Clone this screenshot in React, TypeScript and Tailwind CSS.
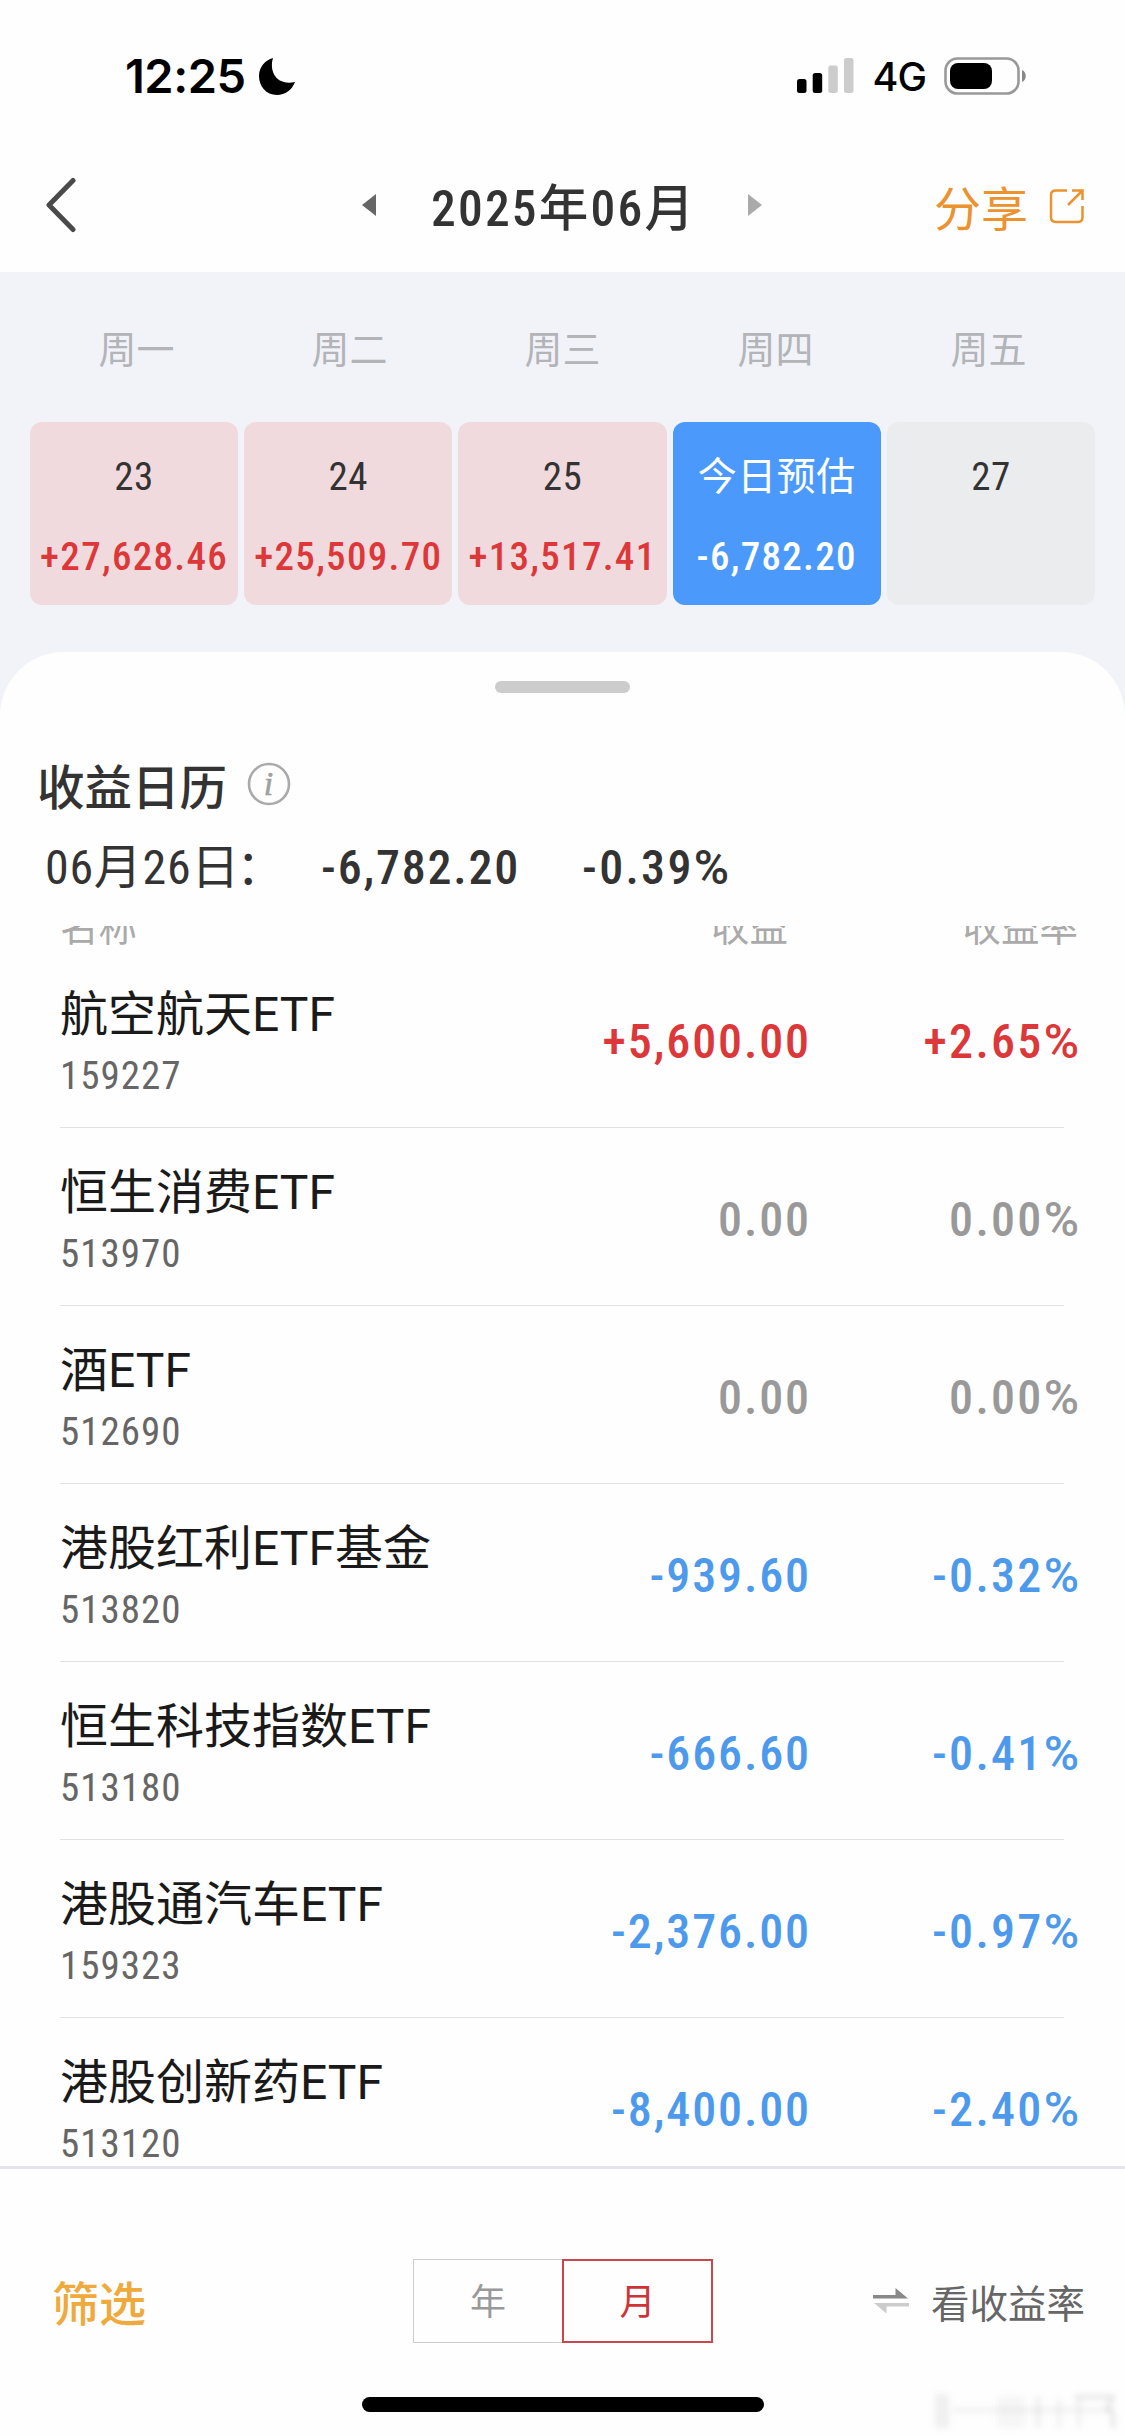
const holdings = [
  { name: '航空航天ETF', code: '159227', profit: '+5,600.00', rate: '+2.65' },
  { name: '恒生消费ETF', code: '513970', profit: '0.00', rate: '0.00' },
  { name: '酒ETF', code: '512690', profit: '0.00', rate: '0.00' },
  { name: '港股红利ETF基金', code: '513820', profit: '-939.60', rate: '-0.32' },
  { name: '恒生科技指数ETF', code: '513180', profit: '-666.60', rate: '-0.41' },
  { name: '港股通汽车ETF', code: '159323', profit: '-2,376.00', rate: '-0.97' },
  { name: '港股创新药ETF', code: '513120', profit: '-8,400.00', rate: '-2.40' },
];

const weekdays = ['周一', '周二', '周三', '周四', '周五'];

const days = [
  { label: '23', profit: '+27,628.46', className: 'bg-[#f1dade] text-[#333]' },
  { label: '24', profit: '+25,509.70', className: 'bg-[#f1dade] text-[#333]' },
  { label: '25', profit: '+13,517.41', className: 'bg-[#f1dade] text-[#333]' },
  { label: '今日预估', profit: '-6,782.20', className: 'bg-[#4b9afb] text-white' },
  { label: '27', profit: '', className: 'bg-[#ebecee] text-[#333]' },
];

function toneOf(value: string) {
  if (value.startsWith('+')) return 'text-[#dc3739]';
  if (value.startsWith('-')) return 'text-[#4d9aec]';
  return 'text-[#999]';
}

function Rate({ value }: { value: string }) {
  return (
    <span className="tracking-[2.3px]">
      {value}
      <span className="tracking-[1px] [font-stretch:100%]">%</span>
    </span>
  );
}

function StatusBar() {
  return (
    <div className="flex h-[136px] items-start justify-between pt-[57px] pr-[98px] pl-[125px] font-['Inter',sans-serif] text-black">
      <div className="flex h-[38px] items-center">
        <span className="w-[121px] text-[47px] font-semibold tracking-[-0.5px]">12:25</span>
        <svg className="ml-3" width="38" height="38" viewBox="0 0 38 38">
          <path d="M15 1C11 14 18 29 37 25C34 33 27 38 19 38C8 38 1 29 1 19C1 10 7 3 15 1Z" />
        </svg>
      </div>
      <div className="flex h-[38px] items-center">
        <svg width="58" height="36" viewBox="0 0 58 36">
          <rect x="0" y="21" width="9.5" height="14" rx="2.5" />
          <rect x="15.7" y="15" width="9.5" height="20" rx="2.5" />
          <rect x="31.3" y="7.5" width="9.5" height="27.5" rx="2.5" fill="#ccc" />
          <rect x="47" y="0" width="9.5" height="35" rx="2.5" fill="#ccc" />
        </svg>
        <span className="ml-[18px] pt-[3px] text-[39.5px] font-medium tracking-[-1px]">4G</span>
        <svg className="ml-[18px]" width="83" height="38" viewBox="0 0 83 38">
          <rect x="1.5" y="1.5" width="73" height="35" rx="12" fill="none" stroke="#999" strokeWidth="2.6" />
          <rect x="6" y="6" width="42" height="26" rx="8" />
          <path d="M78 13C83 15 83 23 78 25Z" fill="#888" />
        </svg>
      </div>
    </div>
  );
}

function Header() {
  return (
    <header className="flex h-[136px] items-center pr-[40px] pl-[46px]">
      <svg className="mt-0.5" width="32" height="56" viewBox="0 0 32 56" fill="none" stroke="#4a4a4a" strokeWidth="5" strokeLinecap="round" strokeLinejoin="round">
        <path d="M27 3.5L3 28L27 52.5" />
      </svg>
      <svg className="mt-0.5 ml-[284px]" width="14" height="22" viewBox="0 0 14 22">
        <path d="M14 0V22L0 11Z" fill="#666" />
      </svg>
      <h1 className="ml-[55px] w-[262px] pt-[10px] text-[49.5px] font-medium tracking-[2.2px] whitespace-nowrap text-[#333] [font-stretch:75%]">
        2025年06月
      </h1>
      <svg className="mt-0.5 ml-[55px]" width="14" height="22" viewBox="0 0 14 22">
        <path d="M0 0V22L14 11Z" fill="#aaa" />
      </svg>
      <div className="ml-auto flex items-center gap-[21px] text-[#ea9330]">
        <span className="pt-[12px] text-[47px] whitespace-nowrap">分享</span>
        <svg className="mt-1" width="36" height="36" viewBox="0 0 36 36" fill="none" stroke="currentColor" strokeWidth="2.5">
          <path d="M18 2.5H7Q2 2.5 2 7V29Q2 34 7 34H29Q33.5 34 33.5 29V18M23 2.5H33.5V12M33 3L19 17" />
        </svg>
      </div>
    </header>
  );
}

function WeekStrip() {
  return (
    <section className="h-[380px] bg-[#f2f3f8] px-[30px]">
      <div className="grid h-[150px] grid-cols-[repeat(5,213px)] items-center pt-1.5 text-center text-[38px] text-[#b3b4b8]">
        {weekdays.map((weekday) => (
          <p key={weekday}>{weekday}</p>
        ))}
      </div>
      <div className="grid grid-cols-5 gap-x-1.5">
        {days.map((day) => (
          <div key={day.label} className={`flex h-[183px] flex-col items-center rounded-xl pt-[27px] ${day.className}`}>
            <span className="text-[39px] leading-[56px] tracking-[0.5px] [font-stretch:75%]">{day.label}</span>
            <span
              className={`mt-[24px] text-[39px] leading-[56px] font-medium tracking-[1.3px] [font-stretch:75%] ${
                day.profit.startsWith('+') ? 'text-[#dc3739]' : ''
              }`}
            >
              {day.profit}
            </span>
          </div>
        ))}
      </div>
    </section>
  );
}

function Summary() {
  return (
    <div className="h-[274px] pl-[37px]">
      <div className="flex justify-center pt-[29px] pr-[37px]">
        <div className="h-3 w-[135px] rounded-full bg-[#ccc]" />
      </div>
      <div className="mt-[61px] flex h-[60px] items-center">
        <h2 className="pt-[11px] text-[47.5px] font-medium text-[#333]">收益日历</h2>
        <svg className="ml-[20px]" width="44" height="44" viewBox="0 0 44 44">
          <circle cx="22" cy="22" r="20" fill="none" stroke="#aaa" strokeWidth="2.6" />
          <text x="21.5" y="32.5" textAnchor="middle" fontSize="34" fontStyle="italic" fontFamily="Liberation Serif, serif" fill="#a0a0a0" stroke="#a0a0a0" strokeWidth="0.6">
            i
          </text>
        </svg>
      </div>
      <div className="mt-[24px] flex h-[60px] items-center pl-2 text-[48px] text-[#333] [font-stretch:75%]">
        <span className="w-[276px] tracking-[0.7px] whitespace-nowrap">
          06月26<span className="tracking-[-3px]">日：</span>
        </span>
        <span className="w-[261px] font-medium tracking-[1.8px]">-6,782.20</span>
        <span className="font-medium">
          <Rate value="-0.39" />
        </span>
      </div>
    </div>
  );
}

function HoldingsTable() {
  return (
    <div className="h-[1240px] overflow-hidden pr-[45px] pl-[60px]">
      <div className="-mt-[22px] grid h-[46px] grid-cols-[1fr_270px_290px] items-start pr-[2px] text-[38.5px] leading-[48px] text-[#aaa]">
        <span>名称</span>
        <span className="text-right">收益</span>
        <span className="text-right">收益率</span>
      </div>
      {holdings.map((item) => (
        <div key={item.code} className="relative grid h-[178px] grid-cols-[1fr_280px_269px] items-center">
          <div className="pt-[8px]">
            <p className="text-[48px] leading-[66px] whitespace-nowrap text-[#1a1a1a]">{item.name}</p>
            <p className="text-[39px] leading-[56px] tracking-[1px] text-[#666] [font-stretch:75%]">{item.code}</p>
          </div>
          <p className={`pt-1.5 text-right text-[48px] font-medium tracking-[1.9px] [font-stretch:75%] ${toneOf(item.profit)}`}>
            {item.profit}
          </p>
          <p className={`pt-1.5 text-right text-[48px] font-medium [font-stretch:75%] ${toneOf(item.rate)}`}>
            <Rate value={item.rate} />
          </p>
          <div className="absolute right-[16px] bottom-0 left-0 h-px bg-[#e2e2e4]" />
        </div>
      ))}
    </div>
  );
}

function Watermark() {
  return (
    <svg className="absolute right-0 bottom-0 blur-[3px]" width="200" height="56" viewBox="0 0 200 56" fill="#999">
      <rect x="10" y="14" width="14" height="34" opacity="0.15" />
      <rect x="28" y="28" width="160" height="4" opacity="0.15" />
      <rect x="72" y="16" width="28" height="32" opacity="0.08" />
      <rect x="110" y="16" width="6" height="32" opacity="0.15" />
      <rect x="132" y="18" width="4" height="30" opacity="0.15" />
      <rect x="152" y="18" width="4" height="30" opacity="0.15" />
      <path d="M150 17H188L182 28L188 34V48" fill="none" stroke="#999" strokeWidth="2" opacity="0.5" />
    </svg>
  );
}

function BottomBar() {
  return (
    <footer className="relative h-[270px] border-t-[3px] border-[#e4e4ea] bg-[#fefefe] pt-[90px]">
      <div className="flex h-[84px] items-center pr-[40px] pl-[52px]">
        <span className="pt-2 text-[47px] font-medium text-[#eeaa3c]">筛选</span>
        <div className="ml-[267px] flex h-[84px] text-[36px]">
          <button className="w-[149px] border border-r-0 border-[#ccc] pt-1 text-[#999]">年</button>
          <button className="w-[151px] border-2 border-[#c9484d] pt-1 text-[#cf3338]">月</button>
        </div>
        <svg className="ml-auto" width="36" height="26" viewBox="0 0 36 26">
          <path d="M0 10.5V7H22.5V0L35 10.5Z" fill="#888" />
          <path d="M36 15V18.5H13.5V25.5L1 15Z" fill="#ccc" />
        </svg>
        <span className="ml-[22px] pt-2 text-[38.5px] text-[#666]">看收益率</span>
      </div>
      <Watermark />
      <div className="absolute bottom-6 left-[362px] h-[15px] w-[402px] rounded-full bg-black" />
    </footer>
  );
}

export default function App() {
  return (
    <div className="flex h-[2436px] w-[1125px] flex-col overflow-hidden bg-[#fefefe] font-['Roboto','Noto_Sans_CJK_SC',sans-serif]">
      <StatusBar />
      <Header />
      <WeekStrip />
      <main className="bg-[#f2f3f8]">
        <div className="rounded-t-[64px] bg-[#fefefe]">
          <Summary />
          <HoldingsTable />
        </div>
      </main>
      <BottomBar />
    </div>
  );
}
